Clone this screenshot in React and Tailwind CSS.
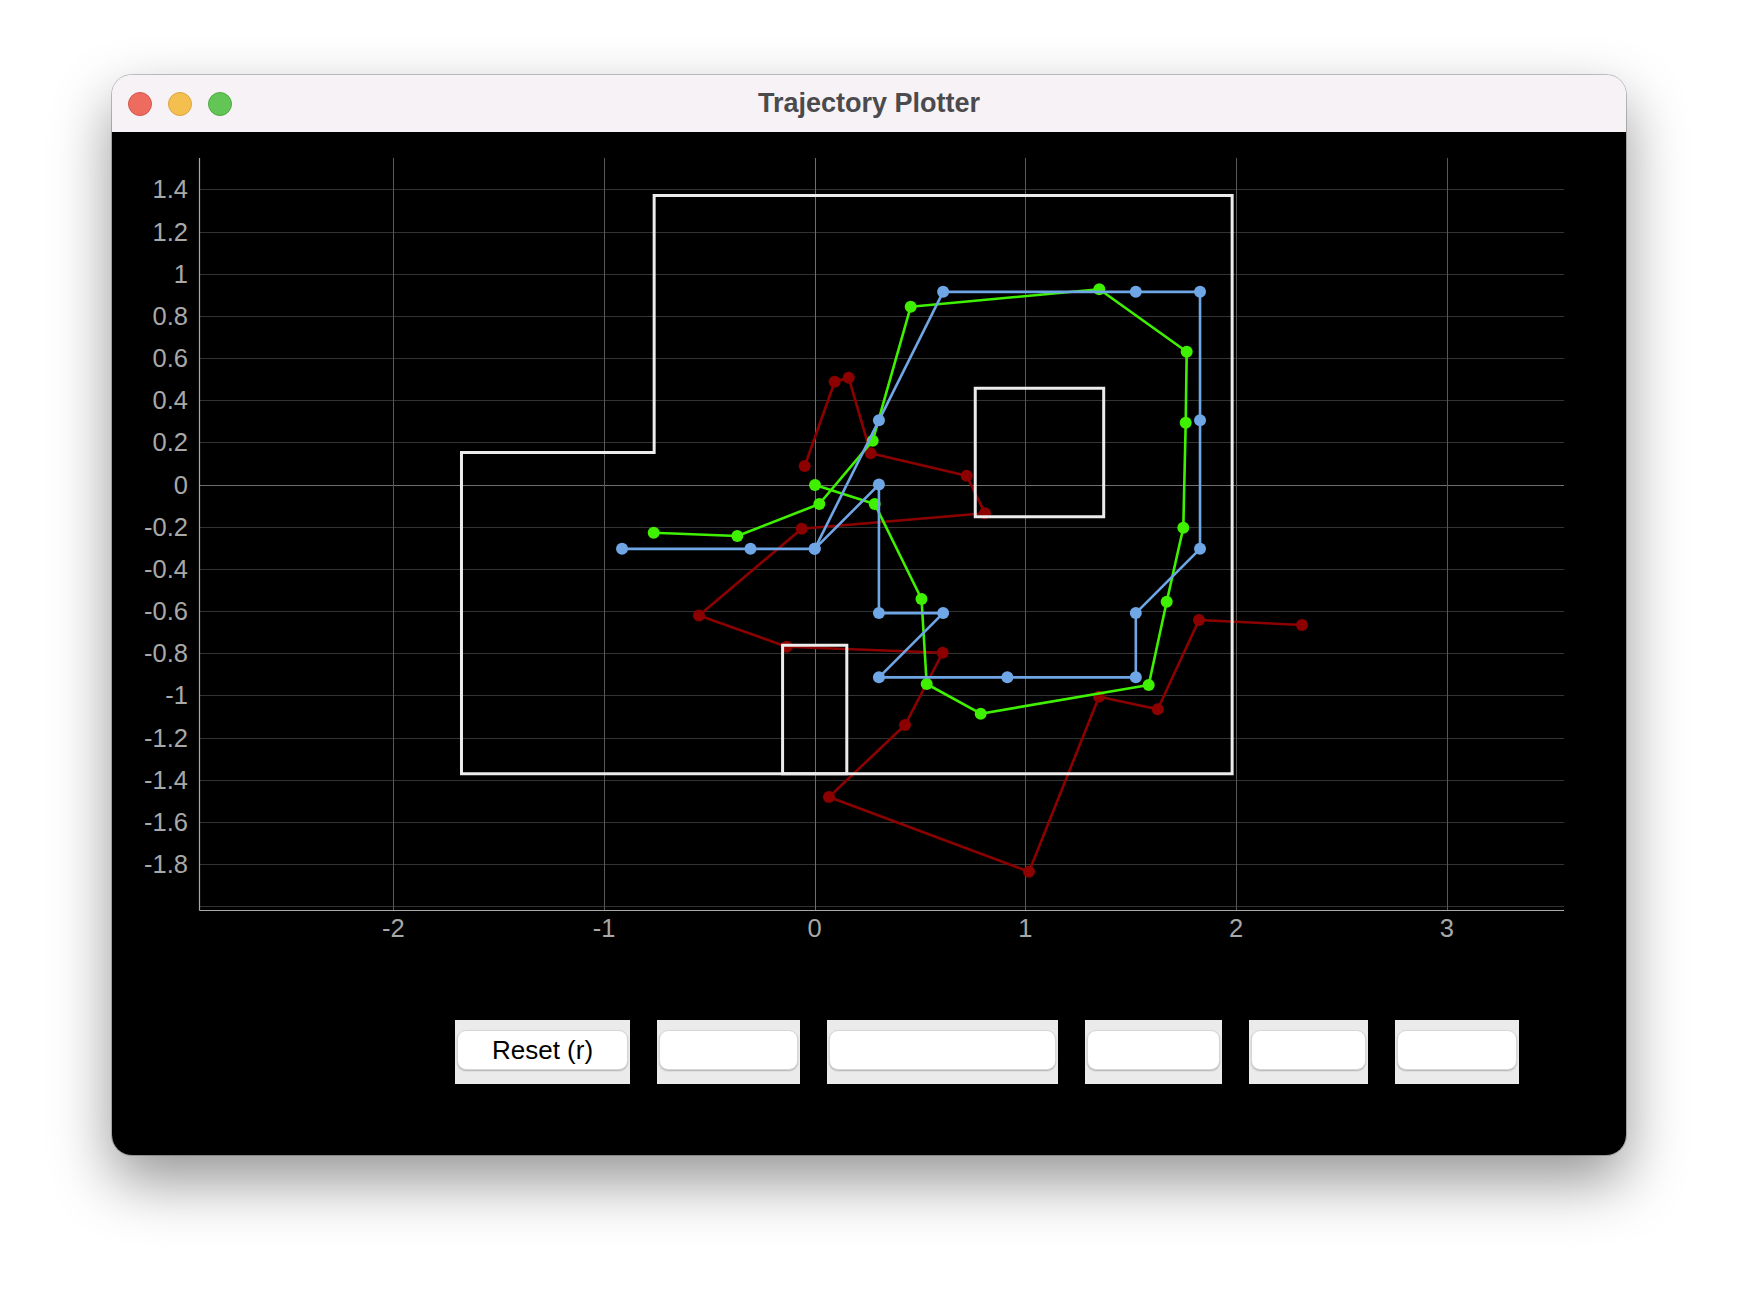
import React from "react";

const X = (m) => 814.7 + 210.7 * m;
const Y = (m) => 484.6 - 210.8 * m;
const FT = 0.3048;
const fx = (f) => X(f * FT);
const fy = (f) => Y(f * FT);
const crisp = (v) => Math.round(v) + 0.5;

const boundary = [
  [-2.5, 4.5], [6.5, 4.5], [6.5, -4.5], [-5.5, -4.5], [-5.5, 0.5], [-2.5, 0.5],
];
const square = [[2.5, 1.5], [4.5, 1.5], [4.5, -0.5], [2.5, -0.5]];
const smallRect = [[-0.5, -2.5], [0.5, -2.5], [0.5, -4.5], [-0.5, -4.5]];

const blueSegs = [
  [[-3, -1], [-1, -1], [0, -1], [1, 0], [1, -2], [2, -2], [1, -3], [3, -3], [5, -3], [5, -2], [6, -1], [6, 1], [6, 3], [5, 3], [2, 3], [1, 1], [0, -1]],
];

const green = [
  [815, 485], [874.7, 504], [921.5, 599], [926.7, 684], [980.7, 713.7], [1148.7, 685],
  [1166.7, 601.7], [1183.3, 527.7], [1185.7, 422.7], [1186.7, 351.7], [1099.3, 289.3],
  [910.7, 306.7], [872.7, 440.7], [819.3, 504], [737.3, 536], [653.7, 532.7],
];

const red = [
  [804.7, 466], [834.7, 381.7], [848.7, 377.7], [870.7, 453.3], [966.7, 475.7], [985, 513.3],
  [801.7, 528.7], [699, 615.5], [786.7, 646.7], [942.7, 652.7], [905, 725], [829, 797],
  [1029, 871.7], [1099, 696.7], [1157.7, 709.3], [1199, 620], [1302, 625],
];

const toPts = (arr) => arr.map(([a, b]) => `${a},${b}`).join(" ");
const ftPts = (arr) => arr.map(([a, b]) => [fx(a), fy(b)]);

const yTicks = [1.4, 1.2, 1, 0.8, 0.6, 0.4, 0.2, 0, -0.2, -0.4, -0.6, -0.8, -1, -1.2, -1.4, -1.6, -1.8];
const hLines = [];
for (let i = -10; i <= 7; i++) hLines.push(i * 0.2);
const xTicks = [-2, -1, 0, 1, 2, 3];

const fmt = (v) => String(Math.round(v * 10) / 10);

function Series({ pts, color }) {
  return (
    <g>
      <polyline points={toPts(pts)} fill="none" stroke={color} strokeWidth="2.6" strokeLinejoin="round" />
      {pts.map(([a, b], i) => (
        <circle key={i} cx={a} cy={b} r="6" fill={color} />
      ))}
    </g>
  );
}

function Chart() {
  const left = 199.5;
  const right = 1564;
  const top = 158;
  const bottom = 910.5;
  return (
    <svg width="1514" height="858" viewBox="112 132 1514 858" className="block">
      {hLines.map((v, i) => {
        const y = crisp(Y(v));
        const zero = Math.abs(v) < 1e-6;
        return (
          <line key={"h" + i} x1={left} x2={right} y1={y} y2={y} stroke={zero ? "#6e6e6e" : "#333333"} strokeWidth="1" />
        );
      })}
      {xTicks.map((k) => {
        const x = crisp(X(k));
        return (
          <line key={"v" + k} x1={x} x2={x} y1={top} y2={bottom} stroke={k === 0 ? "#6e6e6e" : "#585858"} strokeWidth="1" />
        );
      })}
      <line x1={left} x2={left} y1={top} y2={bottom} stroke="#a8a8a8" strokeWidth="1.2" />
      <line x1={left} x2={right} y1={bottom} y2={bottom} stroke="#a8a8a8" strokeWidth="1.2" />

      {yTicks.map((v) => (
        <text key={"yl" + v} x="188" y={Y(v) + 9} textAnchor="end" fontSize="25.5" fill="#a8a8a8">
          {fmt(v)}
        </text>
      ))}
      {xTicks.map((k) => (
        <text key={"xl" + k} x={X(k)} y="937" textAnchor="middle" fontSize="25.5" fill="#a8a8a8">
          {k}
        </text>
      ))}

      <Series pts={red} color="#8c0000" />

      <polygon points={toPts(ftPts(boundary))} fill="none" stroke="#ececec" strokeWidth="3" />
      <polygon points={toPts(ftPts(square))} fill="none" stroke="#ececec" strokeWidth="3" />
      <polygon points={toPts(ftPts(smallRect))} fill="none" stroke="#ececec" strokeWidth="3" />

      <Series pts={green} color="#3ff000" />
      {blueSegs.map((s, i) => (
        <Series key={i} pts={ftPts(s)} color="#6fa6e6" />
      ))}
    </svg>
  );
}

function Btn({ w, label }) {
  return (
    <div className={`h-[64px] bg-[#ebebeb] px-[2px] pt-[10px] pb-[14px] ${w}`}>
      <div className="h-full rounded-[9px] bg-white border border-[#d6d6d6] shadow-[0_1px_1.5px_rgba(0,0,0,0.25)] flex items-center justify-center text-[26px] text-black leading-none">
        {label}
      </div>
    </div>
  );
}

export default function App() {
  return (
    <div className="w-[1738px] h-[1304px] bg-white pl-[112px] pt-[75px] font-['Liberation_Sans',Arial,sans-serif]">
      <div className="w-[1514px] h-[1080px] rounded-[20px] overflow-hidden flex flex-col shadow-[0_0_0_1px_rgba(0,0,0,0.22),0_26px_60px_rgba(0,0,0,0.42)]">
        <div className="h-[57px] bg-[#f6f2f6] grid grid-cols-[1fr_auto_1fr] items-center">
          <div className="flex items-center gap-[16px] pl-[16px]">
            <div className="w-[24px] h-[24px] rounded-full bg-[#ee6b60] border border-[#d5564c]" />
            <div className="w-[24px] h-[24px] rounded-full bg-[#f5bf4f] border border-[#d9a440]" />
            <div className="w-[24px] h-[24px] rounded-full bg-[#62c555] border border-[#4fa944]" />
          </div>
          <div className="text-[27px] font-bold text-[#4b4a4c] leading-none">Trajectory Plotter</div>
          <div />
        </div>
        <div className="flex-1 bg-black flex flex-col">
          <Chart />
          <div className="mt-[30px] pl-[343px] flex gap-[27px]">
            <Btn w="w-[175px]" label="Reset (r)" />
            <Btn w="w-[143px]" label="" />
            <Btn w="w-[231px]" label="" />
            <Btn w="w-[137px]" label="" />
            <Btn w="w-[119px]" label="" />
            <Btn w="w-[124px]" label="" />
          </div>
        </div>
      </div>
    </div>
  );
}
